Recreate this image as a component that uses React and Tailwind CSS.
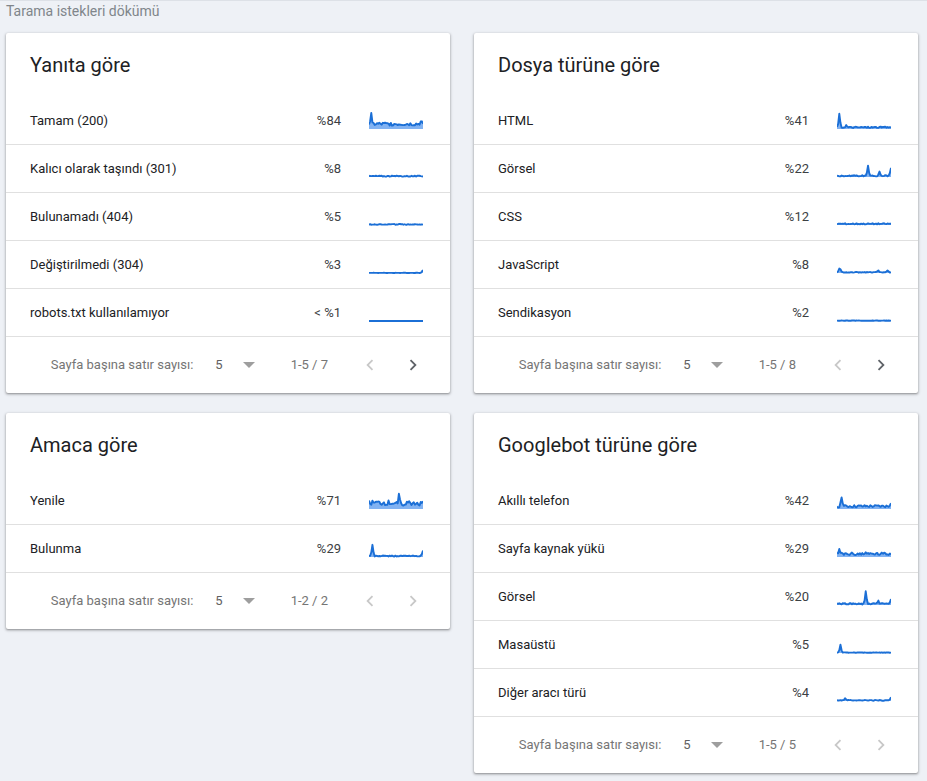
import React from "react";

const N = 48;

// small seeded noise so the sparklines look the same on every render
function series({ seed = 1, base = 0, noise = 0, spikes = [], tail = 0 }) {
  let s = seed * 7919;
  const rnd = () => {
    s = (s * 9301 + 49297) % 233280;
    return s / 233280;
  };
  const pts = [];
  for (let i = 0; i < N; i++) {
    let v = base + rnd() * noise;
    for (const [p, h] of spikes) {
      const d = Math.abs(i - p);
      if (d === 0) v += h;
      else if (d === 1) v += h * 0.3;
    }
    if (i === N - 1) v += tail;
    if (i === N - 2) v += tail * 0.4;
    pts.push(Math.min(v, 16));
  }
  return pts;
}

const Sparkline = ({ spec }) => {
  const pts = series(spec);
  const w = 54;
  const base = 18;
  const coords = pts.map((v, i) => [(i * w) / (N - 1), base - v]);
  const line = coords.map(([x, y]) => `${x.toFixed(2)},${y.toFixed(2)}`).join(" ");
  const area = `0,${base} ${line} ${w},${base}`;
  return (
    <svg width="54" height="20" viewBox="0 0 54 20" className="shrink-0">
      <polygon points={area} fill="#1a73e8" fillOpacity="0.55" />
      <polyline
        points={line}
        fill="none"
        stroke="#1b6fd6"
        strokeWidth="1.9"
        strokeLinejoin="round"
      />
    </svg>
  );
};

const Chevron = ({ dir, disabled }) => (
  <svg
    width="22"
    height="22"
    viewBox="0 0 24 24"
    fill={disabled ? "#c8c8c8" : "#5f6368"}
  >
    {dir === "left" ? (
      <path d="M15.41 7.41L14 6l-6 6 6 6 1.41-1.41L10.83 12z" />
    ) : (
      <path d="M10 6L8.59 7.41 13.17 12l-4.58 4.59L10 18l6-6z" />
    )}
  </svg>
);

const cards = [
  {
    title: "Yanıta göre",
    range: "1-5 / 7",
    next: true,
    rows: [
      ["Tamam (200)", "%84", { seed: 3, base: 3, noise: 3.5, spikes: [[2, 11], [45, 2]], tail: 2 }],
      ["Kalıcı olarak taşındı (301)", "%8", { seed: 5, base: 0.4, noise: 1 }],
      ["Bulunamadı (404)", "%5", { seed: 7, base: 0.2, noise: 0.8 }],
      ["Değiştirilmedi (304)", "%3", { seed: 9, base: 0, noise: 0.2, tail: 3 }],
      ["robots.txt kullanılamıyor", "< %1", { seed: 11, base: 0, noise: 0 }],
    ],
  },
  {
    title: "Dosya türüne göre",
    range: "1-5 / 8",
    next: true,
    rows: [
      ["HTML", "%41", { seed: 13, base: 1, noise: 1.4, spikes: [[2, 13], [8, 2]] }],
      ["Görsel", "%22", { seed: 17, base: 0.6, noise: 1.2, spikes: [[27, 10], [37, 4]], tail: 8 }],
      ["CSS", "%12", { seed: 19, base: 0.6, noise: 1.2 }],
      ["JavaScript", "%8", { seed: 23, base: 0.3, noise: 0.7, spikes: [[2, 3], [3, 2], [36, 2], [44, 2]] }],
      ["Sendikasyon", "%2", { seed: 29, base: 0.2, noise: 0.3 }],
    ],
  },
  {
    title: "Amaca göre",
    range: "1-2 / 2",
    next: false,
    rows: [
      ["Yenile", "%71", { seed: 31, base: 3.5, noise: 5, spikes: [[26, 7]] }],
      ["Bulunma", "%29", { seed: 37, base: 0.5, noise: 1, spikes: [[3, 11]], tail: 5 }],
    ],
  },
  {
    title: "Googlebot türüne göre",
    range: "1-5 / 5",
    next: false,
    rows: [
      ["Akıllı telefon", "%42", { seed: 41, base: 1.5, noise: 2.5, spikes: [[4, 10]], tail: 4 }],
      ["Sayfa kaynak yükü", "%29", { seed: 43, base: 2, noise: 3, spikes: [[2, 4]] }],
      ["Görsel", "%20", { seed: 47, base: 0.5, noise: 1.4, spikes: [[25, 12], [36, 3]], tail: 5 }],
      ["Masaüstü", "%5", { seed: 53, base: 0.2, noise: 0.5, spikes: [[3, 8]] }],
      ["Diğer aracı türü", "%4", { seed: 59, base: 0.3, noise: 0.7, spikes: [[7, 2]], tail: 3 }],
    ],
  },
];

const Card = ({ card }) => (
  <div className="bg-white rounded-[2px] shadow-[0_1px_2px_rgba(0,0,0,0.3),0_1px_3px_1px_rgba(0,0,0,0.12)]">
    <div className="h-[64px] pt-[18px] pl-[24px] text-[20px] leading-[28px] text-[#202124]">
      {card.title}
    </div>
    {card.rows.map(([label, pct, spec]) => (
      <div
        key={label}
        className="h-[48px] flex items-center pl-[24px] pr-[27px] border-b border-[#e0e0e0] text-[13px] text-[#202124]"
      >
        <span className="flex-1">{label}</span>
        <span className="text-[#3c4043] mr-[28px]">{pct}</span>
        <Sparkline spec={spec} />
      </div>
    ))}
    <div className="h-[56px] flex items-center justify-end pr-[26px] text-[13px] text-[#757575]">
      <span>Sayfa başına satır sayısı:</span>
      <span className="ml-[22px] text-[#616161]">5</span>
      <span className="ml-[20px] w-0 h-0 border-l-[6px] border-r-[6px] border-t-[6px] border-l-transparent border-r-transparent border-t-[#9e9e9e]" />
      <span className="ml-[36px]">{card.range}</span>
      <span className="ml-[31px]">
        <Chevron dir="left" disabled />
      </span>
      <span className="ml-[21px]">
        <Chevron dir="right" disabled={!card.next} />
      </span>
    </div>
  </div>
);

export default function App() {
  return (
    <div
      className="min-h-[781px] bg-[#eef1f6] border-t border-[#dde1e7] pl-[6px] pr-[9px] pb-[8px]"
      style={{ fontFamily: "Roboto, 'Noto Sans', sans-serif" }}
    >
      <div className="h-[21px] leading-[21px] text-[14px] text-[#80868b]">
        Tarama istekleri dökümü
      </div>
      <div className="mt-[11px] grid grid-cols-2 gap-x-[24px] gap-y-[20px] items-start">
        {cards.map((c) => (
          <Card key={c.title} card={c} />
        ))}
      </div>
    </div>
  );
}
